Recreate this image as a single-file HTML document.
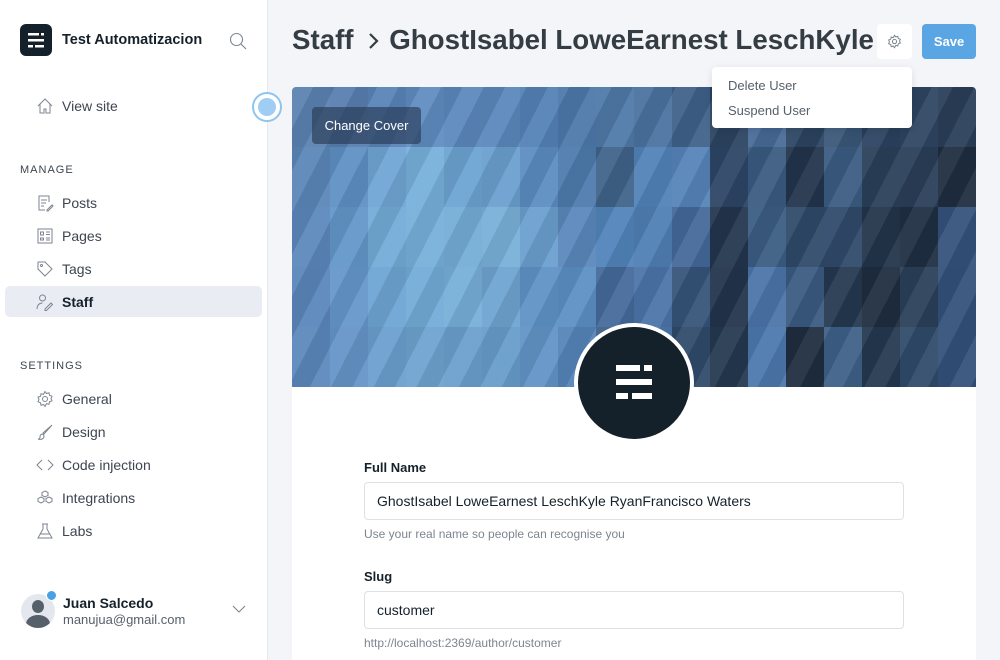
<!DOCTYPE html>
<html><head><meta charset="utf-8"><style>
*{box-sizing:border-box;margin:0;padding:0}
html,body{width:1000px;height:660px;overflow:hidden}
body{font-family:"Liberation Sans",sans-serif;background:#f4f5f8;position:relative;color:#15212a}
.sb{position:absolute;left:0;top:0;width:268px;height:660px;background:#fff;border-right:1px solid #e5e8ee}
.logo{position:absolute;left:20px;top:24px;width:32px;height:32px;background:#15212a;border-radius:6px}
.title{position:absolute;left:62px;top:32px;font-size:14.5px;font-weight:bold;color:#15212a}
.nav{position:absolute;left:36px;font-size:14px;color:#3d4550;display:flex;align-items:center}
.nav svg{width:18px;height:18px;margin-right:8px;stroke:#7d8590;fill:none;stroke-width:1}
.hd{position:absolute;left:20px;font-size:11px;letter-spacing:1px;color:#3d4550}
.act{position:absolute;left:5px;top:286px;width:257px;height:31px;background:#e9edf3;border-radius:5px}
h1{position:absolute;left:292px;top:24px;font-size:27.7px;font-weight:bold;color:#343c44;white-space:nowrap}
.cover{position:absolute;left:292px;top:87px;width:684px;height:300px;border-radius:4px 4px 0 0;overflow:hidden;display:grid;grid-template-columns:repeat(18,38px);grid-template-rows:repeat(5,60px)}
.ov{position:absolute;left:292px;top:87px;width:684px;height:300px;background:repeating-linear-gradient(117deg,rgba(255,255,255,0.06) 0 19px,rgba(0,0,0,0.07) 19px 38px)}
.card{position:absolute;left:292px;top:387px;width:684px;height:273px;background:#fff}
label{position:absolute;left:364px;font-size:13px;font-weight:bold;color:#15212a}
.inp{position:absolute;left:364px;width:540px;height:38px;border:1px solid #dde1e6;border-radius:4px;font-size:14px;color:#15212a;padding:10px 12px}
.help{position:absolute;left:364px;font-size:12px;color:#7d8590}
</style></head><body>
<div class="sb">
<div class="logo"><svg width="32" height="32" viewBox="0 0 32 32"><g fill="#fff"><rect x="8" y="9" width="11" height="2.5"/><rect x="21" y="9" width="3" height="2.5"/><rect x="8" y="15" width="16" height="2.5"/><rect x="8" y="21" width="5" height="2.5"/><rect x="15" y="21" width="9" height="2.5"/></g></svg></div>
<div class="title">Test Automatizacion</div>
<svg style="position:absolute;left:229px;top:32px" width="18" height="18" viewBox="0 0 18 18" fill="none" stroke="#7d8590" stroke-width="1.1"><circle cx="7.5" cy="7.5" r="6"/><path d="M12 12l5 5"/></svg>
<div class="nav" style="top:97px"><svg viewBox="0 0 18 18"><path d="M2 9L9 2l7 7M4 7.5V16h4v-4h2v4h4V7.5"/></svg>View site</div>
<div style="position:absolute;left:252px;top:92px;width:30px;height:30px;border-radius:50%;border:2px solid #8ec5f0;background:#fff"><div style="position:absolute;left:4px;top:4px;width:18px;height:18px;border-radius:50%;background:#9fcdf3"></div></div>
<div class="hd" style="top:164px">MANAGE</div>
<div class="nav" style="top:194px"><svg viewBox="0 0 18 18"><path d="M13 8V2H3v14h6M5 6h6M5 9h5M5 12h3M11 16l5-5 1 1-5 5h-1z"/></svg>Posts</div>
<div class="nav" style="top:227px"><svg viewBox="0 0 18 18"><rect x="2" y="2" width="14" height="14"/><path d="M4.5 5h3v3h-3zM4.5 11h3v2h-3zM10 5h4M10 7.5h4M10 11h4M10 13h4"/></svg>Pages</div>
<div class="nav" style="top:260px"><svg viewBox="0 0 18 18"><path d="M2 2h7l7 7-7 7-7-7z"/><circle cx="5.5" cy="5.5" r="1"/></svg>Tags</div>
</div>
<div class="act"></div>
<div class="nav" style="top:293px;font-weight:bold;color:#15212a"><svg viewBox="0 0 18 18"><circle cx="6.5" cy="5" r="3"/><path d="M1 16c0-4 2.5-6 5.5-6M9 16l6-6 1.5 1.5-6 6H9z"/></svg>Staff</div>
<div class="hd" style="top:360px">SETTINGS</div>
<div class="nav" style="top:390px"><svg viewBox="0 0 18 18"><circle cx="9" cy="9" r="2.5"/><path d="M9 1.5l1.5 2 2.5-.7.5 2.5 2.5 1-1 2.2 1 2.3-2.5 1-.5 2.5-2.5-.7L9 16.5l-1.5-2-2.5.7-.5-2.5-2.5-1 1-2.3-1-2.2 2.5-1 .5-2.5 2.5.7z"/></svg>General</div>
<div class="nav" style="top:423px"><svg viewBox="0 0 18 18"><path d="M16 2L8 11l-1-1 9-8zM7 11c-2 0-3 1-3 3s-1 2-2 2c3 1 6 0 6-3z"/></svg>Design</div>
<div class="nav" style="top:456px"><svg viewBox="0 0 18 18"><path d="M6 4L1 9l5 5M12 4l5 5-5 5"/></svg>Code injection</div>
<div class="nav" style="top:489px"><svg viewBox="0 0 18 18"><path d="M9 2l3 1.5v3L9 8 6 6.5v-3zM5 8l3 1.5v3L5 14 2 12.5v-3zM13 8l3 1.5v3L13 14l-3-1.5v-3z"/></svg>Integrations</div>
<div class="nav" style="top:522px"><svg viewBox="0 0 18 18"><path d="M6 2h6M7 2v5L2 16h14L11 7V2M4 12h10"/></svg>Labs</div>
<div style="position:absolute;left:21px;top:594px;width:34px;height:34px;border-radius:50%;background:#e4e8ee;overflow:hidden"><div style="position:absolute;left:11px;top:6px;width:12px;height:13px;border-radius:50%;background:#56606a"></div><div style="position:absolute;left:5px;top:21px;width:24px;height:18px;border-radius:50% 50% 0 0;background:#56606a"></div></div>
<div style="position:absolute;left:46px;top:590px;width:11px;height:11px;border-radius:50%;background:#48a1e6;border:1.5px solid #fff"></div>
<div style="position:absolute;left:63px;top:595px;font-size:14px;font-weight:bold;color:#15212a">Juan Salcedo</div>
<div style="position:absolute;left:63px;top:612px;font-size:13px;color:#56606a">manujua@gmail.com</div>
<svg style="position:absolute;left:232px;top:605px" width="14" height="9" viewBox="0 0 14 9" fill="none" stroke="#7d8590" stroke-width="1.1"><path d="M1 1l6 6 6-6"/></svg>

<h1>Staff <svg width="14" height="18" viewBox="0 0 14 18" style="margin:0 8px 0 6px;vertical-align:-1px" fill="none" stroke="#343c44" stroke-width="2.2"><path d="M3 2l7 7-7 7"/></svg>GhostIsabel LoweEarnest LeschKyle</h1>
<div style="position:absolute;left:877px;top:24px;width:35px;height:35px;background:#fff;border-radius:4px"><svg style="position:absolute;left:10px;top:10px" width="15" height="15" viewBox="0 0 18 18" fill="none" stroke="#7d8590" stroke-width="1.2"><circle cx="9" cy="9" r="2.5"/><path d="M9 1.5l1.5 2 2.5-.7.5 2.5 2.5 1-1 2.2 1 2.3-2.5 1-.5 2.5-2.5-.7L9 16.5l-1.5-2-2.5.7-.5-2.5-2.5-1 1-2.3-1-2.2 2.5-1 .5-2.5 2.5.7z"/></svg></div>
<div style="position:absolute;left:922px;top:24px;width:54px;height:35px;background:#5aa6e4;border-radius:4px;color:#fff;font-size:13px;font-weight:bold;text-align:center;line-height:35px">Save</div>

<div class="cover">
<div style="background:#5a82b0"></div><div style="background:#577fb0"></div><div style="background:#5884b8"></div><div style="background:#5f8cc0"></div><div style="background:#5b88bc"></div><div style="background:#5a87bb"></div><div style="background:#5381b6"></div><div style="background:#4d78aa"></div><div style="background:#4f79a8"></div><div style="background:#4a729f"></div><div style="background:#3f6189"></div><div style="background:#2c4461"></div><div style="background:#476b97"></div><div style="background:#2c4562"></div><div style="background:#3a5679"></div><div style="background:#2b4260"></div><div style="background:#2e4562"></div><div style="background:#2a3e58"></div>
<div style="background:#5a86b8"></div><div style="background:#5e8fc4"></div><div style="background:#6fa5d3"></div><div style="background:#76b0db"></div><div style="background:#6ca4d2"></div><div style="background:#6a9fcf"></div><div style="background:#5a8cc0"></div><div style="background:#4e7aac"></div><div style="background:#3f6389"></div><div style="background:#5282b8"></div><div style="background:#5583b8"></div><div style="background:#2c4565"></div><div style="background:#3a5a80"></div><div style="background:#22344b"></div><div style="background:#3a5b82"></div><div style="background:#2a4058"></div><div style="background:#2a3e58"></div><div style="background:#1e2d40"></div>
<div style="background:#5b88bb"></div><div style="background:#6396c8"></div><div style="background:#72abd7"></div><div style="background:#76b0da"></div><div style="background:#74acd6"></div><div style="background:#78b0d8"></div><div style="background:#6a9fcf"></div><div style="background:#5987bb"></div><div style="background:#5184ba"></div><div style="background:#4f7fb4"></div><div style="background:#44689a"></div><div style="background:#23364e"></div><div style="background:#3b5c82"></div><div style="background:#2e4968"></div><div style="background:#30496a"></div><div style="background:#22344a"></div><div style="background:#1e2e42"></div><div style="background:#35527a"></div>
<div style="background:#5a86bb"></div><div style="background:#6597ca"></div><div style="background:#6ea5d3"></div><div style="background:#72abd7"></div><div style="background:#76aed8"></div><div style="background:#6ea4d1"></div><div style="background:#5f92c5"></div><div style="background:#5b8fc4"></div><div style="background:#45699a"></div><div style="background:#4a74a8"></div><div style="background:#355377"></div><div style="background:#22344c"></div><div style="background:#4a74a8"></div><div style="background:#3a5a80"></div><div style="background:#25384f"></div><div style="background:#1e2d40"></div><div style="background:#2a3f58"></div><div style="background:#34517a"></div>
<div style="background:#5a88bb"></div><div style="background:#6494c7"></div><div style="background:#6a9fcf"></div><div style="background:#6da3d0"></div><div style="background:#6a9fcd"></div><div style="background:#679ccb"></div><div style="background:#6294c7"></div><div style="background:#5484b8"></div><div style="background:#3e5f88"></div><div style="background:#4c78ad"></div><div style="background:#2f4a69"></div><div style="background:#243850"></div><div style="background:#4c78ad"></div><div style="background:#1e2d40"></div><div style="background:#3e6088"></div><div style="background:#243850"></div><div style="background:#2f4a69"></div><div style="background:#34517a"></div>
</div>
<div class="ov"></div>
<div style="position:absolute;left:312px;top:107px;width:109px;height:37px;background:rgba(40,58,84,0.65);border-radius:4px;color:#fff;font-size:13px;text-align:center;line-height:37px">Change Cover</div>
<div style="position:absolute;left:712px;top:67px;width:200px;height:61px;background:#fff;border-radius:4px;box-shadow:0 2px 8px rgba(0,0,0,0.1)"><div style="position:absolute;left:16px;top:11px;font-size:13px;color:#56606a">Delete User</div><div style="position:absolute;left:16px;top:36px;font-size:13px;color:#56606a">Suspend User</div></div>

<div class="card"></div>
<div style="position:absolute;left:574px;top:323px;width:120px;height:120px;border-radius:50%;background:#fff"></div>
<div style="position:absolute;left:578px;top:327px;width:112px;height:112px;border-radius:50%;background:#15212a"><svg style="position:absolute;left:38px;top:38px" width="36" height="36" viewBox="0 0 36 36"><g fill="#fff"><rect x="0" y="0" width="24" height="6"/><rect x="28" y="0" width="8" height="6"/><rect x="0" y="14" width="36" height="6"/><rect x="0" y="28" width="12" height="6"/><rect x="16" y="28" width="20" height="6"/></g></svg></div>
<label style="top:460px">Full Name</label>
<div class="inp" style="top:482px">GhostIsabel LoweEarnest LeschKyle RyanFrancisco Waters</div>
<div class="help" style="top:527px">Use your real name so people can recognise you</div>
<label style="top:569px">Slug</label>
<div class="inp" style="top:591px">customer</div>
<div class="help" style="top:636px">http://localhost:2369/author/customer</div>
</body></html>
